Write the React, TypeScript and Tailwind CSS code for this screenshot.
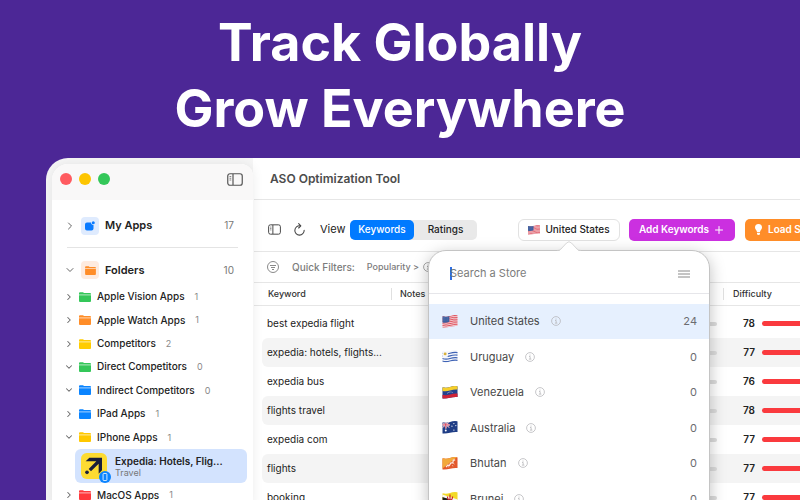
import React from 'react';
import { ChevronDown, ChevronRight, Plus } from 'lucide-react';

const FOLDERS = [
    { name: 'Apple Vision Apps', count: 1, color: '#34c759', open: false },
    { name: 'Apple Watch Apps', count: 1, color: '#ff8d28', open: false },
    { name: 'Competitors', count: 2, color: '#ffcc00', open: false },
    { name: 'Direct Competitors', count: 0, color: '#34c759', open: true },
    { name: 'Indirect Competitors', count: 0, color: '#0a84ff', open: true },
    { name: 'IPad Apps', count: 1, color: '#0a84ff', open: false },
    { name: 'IPhone Apps', count: 1, color: '#ffc800', open: true },
];

const KEYWORDS = [
    { keyword: 'best expedia flight', difficulty: 78 },
    { keyword: 'expedia: hotels, flights...', difficulty: 77 },
    { keyword: 'expedia bus', difficulty: 76 },
    { keyword: 'flights travel', difficulty: 78 },
    { keyword: 'expedia com', difficulty: 77 },
    { keyword: 'flights', difficulty: 77 },
    { keyword: 'booking', difficulty: 77 },
];

const STORES = [
    { id: 'us', name: 'United States', count: 24 },
    { id: 'uy', name: 'Uruguay', count: 0 },
    { id: 've', name: 'Venezuela', count: 0 },
    { id: 'au', name: 'Australia', count: 0 },
    { id: 'bt', name: 'Bhutan', count: 0 },
    { id: 'bn', name: 'Brunei', count: 0 },
];

const FLAGS: Record<string, React.ReactNode> = {
    us: (
        <>
            <rect width="48" height="42" fill="#f4dcdf" />
            {[0, 1, 2, 3, 4, 5, 6].map((i) => (
                <path key={i} d={`M0 ${4 + i * 5.6}q12 4 24 0t24 -2`} stroke="#dd4453" strokeWidth="2.8" fill="none" />
            ))}
            <path d="M0 0H22V21Q10 26 0 23z" fill="#3f5f9f" />
            <path d="M3 8h15M3 12h15M3 16h15" stroke="#9fb2d8" strokeWidth="1" strokeDasharray="1.5 2.5" />
        </>
    ),
    uy: (
        <>
            <rect width="48" height="42" fill="#f5f6fa" />
            {[0, 1, 2, 3].map((i) => (
                <path key={i} d={`M0 ${10 + i * 8}q12 4 24 0t24 -2`} stroke="#3f63b5" strokeWidth="3.6" fill="none" />
            ))}
            <path d="M0 0H18V20Q9 23 0 21z" fill="#f5f6fa" />
            <circle cx="9" cy="12" r="4.5" fill="#d9b13b" />
        </>
    ),
    ve: (
        <>
            <rect width="48" height="42" fill="#24408e" />
            <path d="M0 0H48V11Q36 10 24 14T0 15z" fill="#f6cf2b" />
            <path d="M0 27Q12 30 24 26T48 23V42H0z" fill="#cf2337" />
            <path d="M15 23q9 -8 18 -2" stroke="#fff" strokeWidth="2.2" strokeDasharray="2 2" fill="none" />
        </>
    ),
    au: (
        <>
            <rect width="48" height="42" fill="#1f3d86" />
            <path d="M0 4L22 20M22 3L0 21" stroke="#fff" strokeWidth="3" />
            <path d="M0 4L22 20M22 3L0 21" stroke="#d5324b" strokeWidth="1.2" />
            <path d="M11 0V23M0 12H23" stroke="#fff" strokeWidth="5" />
            <path d="M11 0V23M0 12H23" stroke="#d5324b" strokeWidth="2.8" />
            <circle cx="11" cy="29" r="3" fill="#fff" />
            <circle cx="36" cy="8" r="1.8" fill="#fff" />
            <circle cx="30" cy="16" r="1.8" fill="#fff" />
            <circle cx="42" cy="14" r="1.8" fill="#fff" />
            <circle cx="36" cy="28" r="2" fill="#fff" />
        </>
    ),
    bt: (
        <>
            <rect width="48" height="42" fill="#e2572b" />
            <path d="M0 0H46L0 36z" fill="#f2a93b" />
            <path d="M12 31L17 25L22 26L26 19L33 17L34 10L40 9" stroke="#fbe9dc" strokeWidth="4" fill="none" strokeLinejoin="round" />
            <path d="M19 32l3 -6M30 26l4 2M31 18l7 4" stroke="#fbe9dc" strokeWidth="2" fill="none" />
        </>
    ),
    bn: (
        <>
            <rect width="48" height="42" fill="#f2d928" />
            <path d="M0 8L48 23V31L0 16z" fill="#f7f7f7" />
            <path d="M0 15L48 30V38L0 24z" fill="#1b1b1b" />
            <path d="M24 8v18M16 14q1 12 8 12t8 -12M18 30h12" stroke="#cc2531" strokeWidth="3.6" fill="none" />
        </>
    ),
};

const Flag: React.FC<{ id: string; className: string }> = ({ id, className }) => (
    <svg viewBox="0 0 48 40" className={className} aria-hidden="true">
        <clipPath id={`wave-${id}`}>
            <path d="M1 4Q13 7 24 3T47 1Q48 1 48 3V34Q36 33 24 36T1 39Q0 39 0 37V5Q0 4 1 4z" />
        </clipPath>
        <g clipPath={`url(#wave-${id})`}>{FLAGS[id]}</g>
    </svg>
);

const FolderIcon: React.FC<{ color: string; className: string }> = ({ color, className }) => (
    <svg viewBox="0 0 24 20" className={className} aria-hidden="true">
        <path d="M0 6V2.500a2 2 0 0 1 2-2h6l2 1.500h12a2 2 0 0 1 2 2v2z" fill={color} />
        <path d="M0 5.500h24" stroke="#fff" strokeWidth="1.6" opacity="0.65" />
        <path d="M0 6.500h24V18a2 2 0 0 1-2 2H2a2 2 0 0 1-2-2z" fill={color} />
    </svg>
);

const SidebarIcon: React.FC<{ className: string }> = ({ className }) => (
    <svg viewBox="0 0 32 26" fill="none" stroke="currentColor" strokeWidth="2.4" className={className} aria-hidden="true">
        <rect x="1.5" y="1.5" width="29" height="23" rx="4.5" />
        <path d="M12 2v22" />
        <path d="M5 7h3.5M5 10.5h3.5M5 14h3.5" strokeWidth="1.4" />
    </svg>
);

const InfoIcon: React.FC<{ className: string }> = ({ className }) => (
    <svg viewBox="0 0 20 20" fill="none" stroke="currentColor" strokeWidth="1.5" className={className} aria-hidden="true">
        <circle cx="10" cy="10" r="8.8" />
        <path d="M8 9h2.3v5M7.8 14.3h5" />
        <circle cx="10" cy="5.9" r="1.1" fill="currentColor" stroke="none" />
    </svg>
);

const Sidebar: React.FC = () => (
    <aside className="w-[201px] shrink-0 mt-[6px] rounded-tl-2xl rounded-tr-xl overflow-hidden bg-white shadow-[0_0_12px_rgba(0,0,0,0.08)] z-10">
        <div className="h-9 bg-[#f9f8f8] flex items-center pl-2 pr-[10px] pb-[6px]">
            <div className="flex gap-[7px]">
                <span className="w-3 h-3 rounded-full bg-[#ff5b60]" />
                <span className="w-3 h-3 rounded-full bg-[#fdc500]" />
                <span className="w-3 h-3 rounded-full bg-[#34c759]" />
            </div>
            <button className="ml-auto text-[#555]" aria-label="Toggle sidebar">
                <SidebarIcon className="w-4 h-[13px]" />
            </button>
        </div>

        <div className="mx-[15px] h-12 flex items-center pt-1 border-b border-[#e4e4e4] text-[11px]">
            <ChevronRight className="w-3 h-3 -ml-[3px] text-[#666]" strokeWidth={2} />
            <span className="ml-[5px] w-[18px] h-[18px] rounded bg-[#dfebfe] flex items-center justify-center">
                <svg viewBox="0 0 20 20" className="w-[10px] h-[10px]" aria-hidden="true">
                    <path d="M4 3h8.2a4.4 4.4 0 0 0 4.8 5v7a4 4 0 0 1-4 4H4a4 4 0 0 1-4-4V7a4 4 0 0 1 4-4z" fill="#0a7bff" />
                    <circle cx="16.5" cy="3.5" r="3" fill="#0a7bff" />
                </svg>
            </span>
            <span className="ml-[6px] font-semibold text-[#222]">My Apps</span>
            <span className="ml-auto mr-1 text-[10px] text-[#777]">17</span>
        </div>

        <div className="mx-[15px] h-[37px] flex items-center pt-[7px] text-[11px]">
            <ChevronDown className="w-3 h-3 -ml-[3px] text-[#666]" strokeWidth={2} />
            <span className="ml-[5px] w-[18px] h-[18px] rounded bg-[#feebdf] flex items-center justify-center">
                <FolderIcon color="#ff8d28" className="w-[11px] h-[9px]" />
            </span>
            <span className="ml-[6px] font-semibold text-[#222]">Folders</span>
            <span className="ml-auto mr-1 text-[10px] text-[#777]">10</span>
        </div>

        <ul className="h-[164px] grid auto-rows-fr">
            {FOLDERS.map((folder) => (
                <FolderRow key={folder.name} {...folder} />
            ))}
        </ul>

        <div className="ml-[23px] mr-[6px] h-[34px] rounded-md bg-[#d3e3fe] flex items-center pl-[6px]">
            <div className="relative">
                <svg viewBox="0 0 78 78" className="w-[26px] h-[26px]" aria-hidden="true">
                    <rect width="78" height="78" rx="17" fill="#fddb32" />
                    <path d="M14 25L25 14H63V52L53 62V32L30 55L23 48L46 25z" fill="#191e3b" />
                    <circle cx="18" cy="58" r="5.5" fill="#191e3b" />
                </svg>
                <svg viewBox="0 0 22 22" className="absolute -right-1 -bottom-1 w-3 h-3" aria-hidden="true">
                    <circle cx="11" cy="11" r="11" fill="#0a84ff" />
                    <rect x="7.5" y="4.5" width="7" height="13" rx="1.5" fill="none" stroke="#fff" strokeWidth="1.5" />
                </svg>
            </div>
            <div className="ml-2">
                <p className="text-[10px] leading-3 font-semibold text-[#222]">Expedia: Hotels, Flig...</p>
                <p className="text-[9px] leading-[11px] text-[#777]">Travel</p>
            </div>
        </div>

        <ul className="h-6 grid auto-rows-fr">
            <FolderRow name="MacOS Apps" count={1} color="#ff383c" open={false} />
        </ul>
    </aside>
);

const FolderRow: React.FC<{ name: string; count: number; color: string; open: boolean }> = ({ name, count, color, open }) => {
    const Chevron = open ? ChevronDown : ChevronRight;
    return (
        <li className="flex items-center pl-3">
            <Chevron className="w-[10px] h-[10px] text-[#666]" strokeWidth={2.5} />
            <FolderIcon color={color} className="ml-[5px] w-3 h-[10px]" />
            <span className="ml-[6px] text-[10px] font-medium text-[#222]">{name}</span>
            <span className="ml-[10px] text-[9px] text-[#888]">{count}</span>
        </li>
    );
};

const StorePopover: React.FC = () => (
    <div className="absolute left-1/2 top-[31px] -translate-x-1/2 w-[282px] z-20">
        <div className="rounded-[18px] border border-[#c4c4c4] bg-white shadow-[0_4px_16px_rgba(0,0,0,0.25)] overflow-hidden">
            <div className="h-[43px] flex items-center pl-[21px] pr-[19px] pt-1 border-b border-[#e6e6ea]">
                <span className="w-[2px] -mr-[2px] h-[13px] bg-[#2f6fe4]" />
                <input
                    type="text"
                    aria-label="Search a Store"
                    placeholder="Search a Store"
                    className="flex-1 min-w-0 text-[11px] outline-none placeholder:text-[#7c7c7c]"
                />
                <svg viewBox="0 0 12 8" className="w-3 h-2" stroke="#8a8a8a" aria-hidden="true">
                    <path d="M0 1h12M0 4h12M0 7h12" />
                </svg>
            </div>
            <ul className="mt-[10px] h-[213px] grid auto-rows-fr">
                {STORES.map((store, index) => (
                    <li
                        key={store.id}
                        className={`flex items-center pl-[13px] pr-3 text-[11px] text-[#484848] ${index === 0 ? 'bg-[#e6f0fe]' : ''}`}
                    >
                        <Flag id={store.id} className="w-4 h-[13px]" />
                        <span className="ml-3">{store.name}</span>
                        <InfoIcon className="ml-[11px] w-[10px] h-[10px] text-[#b4b4b8]" />
                        <span className="ml-auto text-[#6c6c70]">{store.count}</span>
                    </li>
                ))}
            </ul>
        </div>
        <svg viewBox="0 0 24 11" className="absolute -top-[9px] left-1/2 -translate-x-1/2 w-6 h-[11px]" aria-hidden="true">
            <path d="M0 10Q2.500 10 4 8.500L9.500 2.500Q12 -0.500 14.500 2.500L20 8.500Q21.500 10 24 10V11H0z" fill="#fff" />
            <path d="M0 9.500Q2.500 9.500 4 8L9.500 2Q12 -0.500 14.500 2L20 8Q21.500 9.500 24 9.500" fill="none" stroke="#cfcfcf" strokeWidth="0.8" />
        </svg>
    </div>
);

const Toolbar: React.FC = () => (
    <div className="h-[52px] flex items-center pl-[14px] pt-2 border-b border-[#e6e6e6] text-[10px] whitespace-nowrap">
        <button className="text-[#444]" aria-label="Toggle panel">
            <SidebarIcon className="w-[13px] h-[11px]" />
        </button>
        <button className="ml-3 text-[#444]" aria-label="Refresh">
            <svg
                viewBox="0 0 39 39"
                className="w-[13px] h-[13px]"
                fill="none"
                stroke="currentColor"
                strokeWidth="3.2"
                strokeLinecap="round"
                strokeLinejoin="round"
                aria-hidden="true"
            >
                <path d="M21 8.500A14 14 0 1 0 33.500 22" />
                <path d="M17 2L23.500 8.500L17 15" />
            </svg>
        </button>
        <span className="ml-[14px] w-[30px] shrink-0 text-[11px] text-[#222]">View</span>
        <div className="w-[127px] h-5 shrink-0 flex rounded-[5px] bg-[#e9e9e9] font-medium">
            <button className="w-16 rounded-[5px] bg-[#007aff] text-white">Keywords</button>
            <button className="flex-1 text-[#222]">Ratings</button>
        </div>
        <div className="relative ml-[41px] shrink-0">
            <button className="w-[102px] h-[22px] flex items-center justify-center gap-[5px] rounded-md border border-[#e2e2e2] bg-white font-medium text-[#222]">
                <Flag id="us" className="w-3 h-[10px]" />
                United States
            </button>
            <StorePopover />
        </div>
        <button className="ml-[9px] w-[106px] h-[22px] shrink-0 flex items-center justify-center gap-1 rounded-[5px] bg-[#cb30e0] font-semibold text-white">
            Add Keywords
            <Plus className="w-3 h-3" strokeWidth={2} />
        </button>
        <button className="ml-[10px] h-[22px] px-[10px] shrink-0 flex items-center gap-[6px] rounded-[5px] bg-[#ff8d28] font-semibold text-white">
            <svg viewBox="0 0 14 22" className="w-[7px] h-[11px]" fill="#fff" aria-hidden="true">
                <path d="M7 0a7 7 0 0 1 7 7c0 4-3.500 5.500-4 9H4C3.500 12.500 0 11 0 7a7 7 0 0 1 7-7z" />
                <path d="M4 17.500h6V19a3 3 0 0 1-6 0z" />
            </svg>
            Load Suggestions
        </button>
    </div>
);

const KeywordTable: React.FC = () => (
    <table className="w-full min-w-[700px] table-fixed border-collapse text-left">
        <colgroup>
            <col className="w-2" />
            <col className="w-[130px]" />
            <col className="w-[208px]" />
            <col className="w-[124px]" />
            <col />
        </colgroup>
        <thead className="text-[9px] text-[#333]">
            <tr className="h-[22px] border-b border-[#e6e6e6]">
                <th />
                <th className="p-0 font-medium">
                    <div className="h-3 pl-[6px] flex items-center border-r border-[#e0e0e0]">Keyword</div>
                </th>
                <th className="p-0 pl-2 font-medium">Notes</th>
                <th className="p-0">
                    <div className="h-3 border-r border-[#e0e0e0]" />
                </th>
                <th className="p-0 pl-[9px] font-medium">Difficulty</th>
            </tr>
        </thead>
        <tbody className="text-[10px] text-[#222]">
            <tr className="h-1">
                <td colSpan={5} />
            </tr>
            {KEYWORDS.map((row, index) => (
                <tr key={row.keyword} className={`h-[29px] ${index % 2 === 1 ? '[&>td:not(:first-child)]:bg-[#f4f4f4]' : ''}`}>
                    <td className="p-0" />
                    <td className="p-0 pl-[5px] rounded-l-md whitespace-nowrap">{row.keyword}</td>
                    <td className="p-0" />
                    <td className="p-0 pr-[7px]">
                        <div className="h-1 rounded-full bg-[#dcdcdc]" />
                    </td>
                    <td className="p-0">
                        <div className="flex items-center gap-[7px] pl-[18px]">
                            <span className="w-[13px] text-right font-semibold">{row.difficulty}</span>
                            <span className="w-[100px] h-[5px] rounded-full bg-[#fa3a3e]" />
                        </div>
                    </td>
                </tr>
            ))}
        </tbody>
    </table>
);

export default function App() {
    return (
        <div className="h-screen overflow-hidden flex flex-col bg-[#4c2796] font-['Inter',sans-serif]">
            <h1 className="pt-[10px] text-center text-[52px] leading-[66px] font-bold text-white">
                Track Globally
                <br />
                Grow Everywhere
            </h1>

            <div className="mt-4 ml-[46px] flex-1 min-h-0 flex items-start pl-[6px] rounded-tl-[22px] overflow-hidden bg-[#f6f6f6]">
                <Sidebar />

                <main className="flex-1 min-w-0 pl-px self-stretch bg-white">
                    <header className="h-[42px] flex items-center pl-4 border-b border-[#e6e6e6]">
                        <h2 className="text-[12px] font-semibold text-[#4c4c4c]">ASO Optimization Tool</h2>
                    </header>
                    <Toolbar />
                    <div className="h-[31px] flex items-center pl-[13px] border-b border-[#e6e6e6] text-[10px] font-medium text-[#7c7c7c] whitespace-nowrap">
                        <svg viewBox="0 0 24 24" className="w-3 h-3" fill="none" stroke="#8a8a8a" strokeWidth="2" aria-hidden="true">
                            <circle cx="12" cy="12" r="11" />
                            <path d="M6 9h12M8 13h8M10 17h4" />
                        </svg>
                        <span className="ml-[13px]">Quick Filters:</span>
                        <span className="ml-3 text-[9px]">Popularity &gt;</span>
                        <InfoIcon className="ml-1 w-[10px] h-[10px] text-[#8a8a8a]" />
                    </div>
                    <KeywordTable />
                </main>
            </div>
        </div>
    );
}
